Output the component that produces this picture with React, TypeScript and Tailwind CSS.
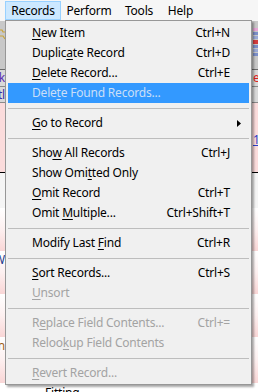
import clsx from "clsx";

type MenuEntry =
  | "sep"
  | {
      label: string;
      shortcut?: string;
      disabled?: boolean;
      active?: boolean;
      submenu?: boolean;
    };

const recordsMenu: Array<MenuEntry> = [
  { label: "&New Item", shortcut: "Ctrl+N" },
  { label: "Duplic&ate Record", shortcut: "Ctrl+D" },
  { label: "&Delete Record...", shortcut: "Ctrl+E" },
  { label: "Dele&te Found Records...", active: true },
  "sep",
  { label: "&Go to Record", submenu: true },
  "sep",
  { label: "Sho&w All Records", shortcut: "Ctrl+J" },
  { label: "Show Omi&tted Only" },
  { label: "&Omit Record", shortcut: "Ctrl+T" },
  { label: "Omit &Multiple...", shortcut: "Ctrl+Shift+T" },
  "sep",
  { label: "Modify Last &Find", shortcut: "Ctrl+R" },
  "sep",
  { label: "&Sort Records...", shortcut: "Ctrl+S" },
  { label: "&Unsort", disabled: true },
  "sep",
  { label: "R&eplace Field Contents...", shortcut: "Ctrl+=", disabled: true },
  { label: "Reloo&kup Field Contents", disabled: true },
  "sep",
  { label: "&Revert Record...", disabled: true },
];

const menuBar = [
  { label: "Records", width: "w-[56px]", open: true },
  { label: "Perform", width: "w-[56px]" },
  { label: "Tools", width: "w-[44px]" },
  { label: "Help", width: "w-[39px]" },
];

// renders "Dele&te" with the access key underlined
const Mnemonic: React.FC<{ label: string }> = ({ label }) => {
  const [before, after] = label.split("&");
  return (
    <span>
      {before}
      <span className="underline decoration-1 underline-offset-[2px]">
        {after[0]}
      </span>
      {after.slice(1)}
    </span>
  );
};

const Band: React.FC<{ height: string; label?: string; labelClass?: string }> = ({
  height,
  label,
  labelClass,
}) => (
  <div
    className={clsx(
      "flex items-start bg-linear-to-b from-white via-[#fdf0f0] to-[#f9d6d6]",
      height
    )}
  >
    {label && (
      <div className="flex w-[5px] justify-end overflow-hidden whitespace-nowrap">
        <span className={labelClass}>{label}</span>
      </div>
    )}
  </div>
);

const RecordsMenu = () => (
  <div className="absolute left-[5px] top-[20px] w-[247px] border border-[#979797] bg-[#f0f0f0] px-[2px] pb-[1px] pt-[2px] shadow-[2px_2px_2px_rgba(0,0,0,0.35)]">
    {recordsMenu.map((entry, i) =>
      entry === "sep" ? (
        <div key={i} className="h-[10px] pt-[5px]">
          <div className="h-px bg-[#bdbdbd]" />
        </div>
      ) : (
        <div
          key={i}
          className={clsx(
            "flex h-[20px] items-center justify-between whitespace-nowrap pl-[24px] pr-[19px] leading-[20px]",
            entry.active && "bg-[#3399ff] text-[#cadff7]",
            entry.disabled && "text-[#a3a3a3]",
            !entry.active && !entry.disabled && "text-black"
          )}
        >
          <Mnemonic label={entry.label} />
          {entry.shortcut && <span>{entry.shortcut}</span>}
          {entry.submenu && (
            <svg width="4" height="7" viewBox="0 0 4 7" className="-mr-[11px]">
              <path d="M0 0L4 3.5L0 7Z" fill="#000" />
            </svg>
          )}
        </div>
      )
    )}
  </div>
);

export default function App() {
  return (
    <div className="relative h-[392px] w-[258px] overflow-hidden bg-white font-['Noto_Sans',sans-serif] text-[12px] tracking-[-0.2px]">
      {/* menu bar */}
      <div className="flex h-[21px] bg-[#f6f6f6] pl-[5px] pt-[1px]">
        {menuBar.map((item) => (
          <div
            key={item.label}
            className={clsx(
              "h-[19px] border text-center leading-[17px] text-black",
              item.width,
              item.open ? "border-[#99d1ff] bg-[#cce8ff]" : "border-transparent"
            )}
          >
            {item.label}
          </div>
        ))}
      </div>

      {/* toolbar behind the menu */}
      <div className="flex h-[48px] justify-between bg-[#c8c8c8] pt-[6px]">
        <svg width="5" height="14" viewBox="0 0 5 14">
          <path d="M0 3h2l1 2h2M0 9h3l2 3" stroke="#c9a437" strokeWidth="1.2" fill="none" />
        </svg>
        <div className="flex h-[34px] w-[5px] flex-col gap-[1px] pt-[1px]">
          <div className="h-[3px] bg-[#e6a6d6]" />
          <div className="h-[3px] bg-[#7c8fc8]" />
          <div className="h-[3px] bg-[#9aa9d6]" />
          <div className="h-[4px] bg-[#d23c3c]" />
          <div className="h-[3px] bg-[#7c8fc8]" />
          <div className="h-[3px] bg-[#9aa9d6]" />
          <div className="h-[3px] bg-[#7c8fc8]" />
        </div>
      </div>

      {/* link rows */}
      <div className="flex h-[17px] items-center justify-between border-t border-[#6b6b6b] bg-[#d9d9d9] leading-[16px]">
        <div className="flex w-[5px] justify-end overflow-hidden whitespace-nowrap">
          <span className="text-[#5b2fb5]">Back</span>
        </div>
        <div className="w-[5px] overflow-hidden whitespace-nowrap">
          <span className="text-[#e02020]">edit</span>
        </div>
      </div>
      <div className="flex h-[17px] items-center justify-between border-y border-[#8a8a8a] bg-[#d9d9d9] leading-[15px]">
        <div className="flex w-[5px] justify-end overflow-hidden whitespace-nowrap">
          <span className="text-[#3a2fa8]">Detl</span>
        </div>
      </div>

      {/* pink record area */}
      <div className="flex h-[69px] items-start justify-end bg-[#fbdcdc] pt-[30px]">
        <div className="w-[5px] overflow-hidden whitespace-nowrap leading-[14px]">
          <span className="text-[#2a40c8] underline">1</span>
        </div>
      </div>
      <div className="h-px bg-black" />
      <div className="h-[35px] bg-[#f5f5f5]" />

      <Band height="h-[43px]" />
      <Band height="h-[43px]" label="W" labelClass="text-[#1a3a8a]" />
      <Band height="h-[43px]" />
      <Band height="h-[46px]" label="n" labelClass="text-[#a0601a]" />

      <div className="h-[20px] pl-[45px] leading-[20px] text-black">Fitting</div>

      <RecordsMenu />
    </div>
  );
}
